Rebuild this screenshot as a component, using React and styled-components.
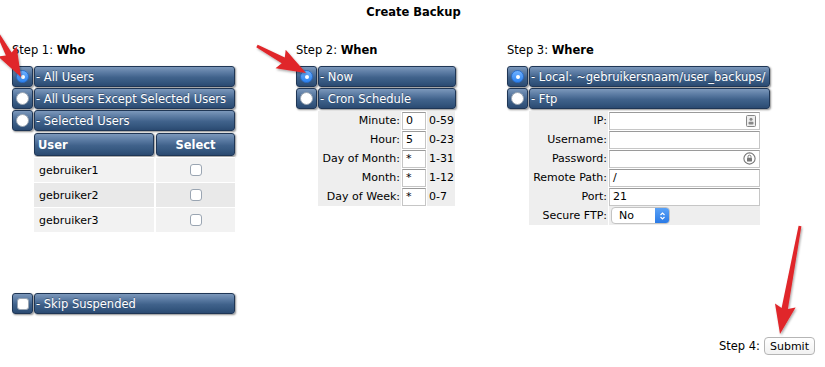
import React from "react";
import styled, { createGlobalStyle } from "styled-components";

const GlobalStyle = createGlobalStyle`
  html, body {
    margin: 0;
    padding: 0;
    background: #fff;
  }
  body {
    font-family: "DejaVu Sans", Verdana, sans-serif;
    font-size: 11px;
    color: #000;
  }
`;

const Page = styled.div`
  position: relative;
  width: 825px;
  height: 367px;
  overflow: hidden;
`;

const Title = styled.div`
  text-align: center;
  font-weight: bold;
  font-size: 11.5px;
  padding-top: 5px;
  height: 21px;
  padding-left: 2px;
`;

const Columns = styled.div`
  display: flex;
  align-items: flex-start;
  padding-top: 17px;
`;

const Column = styled.div`
  display: flex;
  flex-direction: column;
  width: ${(p) => p.$width}px;
  margin-left: ${(p) => p.$offset}px;
`;

const StepHeading = styled.div`
  font-size: 11.5px;
  height: 23px;
  b {
    font-weight: bold;
  }
`;

const barGradient = `
  background: linear-gradient(
    to bottom,
    #7c98bb 0%,
    #5a7aa2 30%,
    #40628b 55%,
    #34567e 80%,
    #2b4a71 100%
  );
  border: 1px solid #1f3655;
  border-radius: 3px;
  box-shadow: 1px 1px 2px rgba(0, 0, 0, 0.45);
`;

const OptionRow = styled.div`
  display: flex;
  gap: 1px;
  height: 21px;
  margin-bottom: 1px;
`;

const ToggleCell = styled.div`
  ${barGradient}
  width: 19px;
  display: flex;
  align-items: center;
  justify-content: center;
  flex-shrink: 0;
`;

const Radio = styled.span`
  width: 13px;
  height: 13px;
  border-radius: 50%;
  box-sizing: border-box;
  display: flex;
  align-items: center;
  justify-content: center;
  background: ${(p) =>
    p.$on ? "linear-gradient(#6fb1ff, #2d83f0)" : "#fff"};
  border: 1px solid ${(p) => (p.$on ? "#2a6fce" : "#9aa5b2")};
  &::after {
    content: "";
    width: 4px;
    height: 4px;
    border-radius: 50%;
    background: #fff;
    display: ${(p) => (p.$on ? "block" : "none")};
  }
`;

const Square = styled.span`
  width: 12px;
  height: 12px;
  border-radius: 3px;
  background: #fff;
  border: 1px solid #9aa5b2;
  box-sizing: border-box;
`;

const OptionLabel = styled.div`
  ${barGradient}
  flex: 1;
  color: #fff;
  font-size: 11.5px;
  display: flex;
  align-items: center;
  padding-left: 1px;
  white-space: nowrap;
  overflow: hidden;
  text-shadow: 0 -1px 0 rgba(0, 0, 0, 0.3);
`;

const UserTable = styled.div`
  margin-left: 22px;
  margin-top: 1px;
  display: grid;
  grid-template-columns: 120px 1fr;
  column-gap: 2px;
`;

const HeadCell = styled.div`
  ${barGradient}
  height: 21px;
  color: #fff;
  font-weight: bold;
  font-size: 11.5px;
  display: flex;
  align-items: center;
  justify-content: ${(p) => (p.$center ? "center" : "flex-start")};
  padding-left: ${(p) => (p.$center ? 0 : 3)}px;
  margin-bottom: 1px;
`;

const UserCell = styled.div`
  height: 24px;
  background: ${(p) => (p.$alt ? "#e9e9e9" : "#f2f2f2")};
  border-top: 1px solid #fff;
  display: flex;
  align-items: center;
  justify-content: ${(p) => (p.$center ? "center" : "flex-start")};
  padding-left: ${(p) => (p.$center ? 0 : 5)}px;
  font-size: 11px;
`;

const SkipRow = styled(OptionRow)`
  margin-top: 61px;
`;

const FieldTable = styled.div`
  margin-left: 22px;
  margin-top: 1px;
  display: grid;
  grid-template-columns: ${(p) => p.$cols};
  column-gap: 1px;
`;

const FieldLabel = styled.div`
  height: 19px;
  background: #eeeeee;
  display: flex;
  align-items: center;
  justify-content: flex-end;
  padding-right: 1px;
  white-space: nowrap;
  font-size: 11px;
`;

const FieldValue = styled.div`
  height: 19px;
  background: ${(p) => (p.$plain ? "#eeeeee" : "#fff")};
  display: flex;
  align-items: center;
  padding-left: ${(p) => (p.$plain ? 2 : 0)}px;
  font-size: 11px;
`;

const TextInput = styled.div`
  box-sizing: border-box;
  width: 100%;
  height: 18px;
  border: 1px solid #c6c6c6;
  border-top-color: #9a9a9a;
  background: #fff;
  display: flex;
  align-items: center;
  justify-content: space-between;
  padding: 0 3px;
  font-size: 11px;
`;

const SelectBox = styled.div`
  box-sizing: border-box;
  width: 59px;
  height: 17px;
  border: 1px solid #c3c3c3;
  border-radius: 4px;
  background: #fff;
  display: flex;
  align-items: center;
  justify-content: space-between;
  padding-left: 7px;
  font-size: 11px;
  overflow: hidden;
`;

const SelectArrow = styled.span`
  width: 14px;
  height: 100%;
  background: linear-gradient(#5aa2f7, #2a7ae6);
  display: flex;
  align-items: center;
  justify-content: center;
`;

const Footer = styled.div`
  position: absolute;
  right: 10px;
  top: 337px;
  display: flex;
  align-items: center;
  gap: 4px;
  font-size: 11.5px;
`;

const SubmitButton = styled.button`
  font-family: "DejaVu Sans", Verdana, sans-serif;
  font-size: 11px;
  height: 18px;
  padding: 0 5px;
  background: linear-gradient(#fff, #f1f1f1);
  border: 1px solid #b5b5b5;
  border-radius: 4px;
  color: #000;
`;

const Overlay = styled.svg`
  position: absolute;
  left: 0;
  top: 0;
  pointer-events: none;
`;

const Arrow = ({ x1, y1, x2, y2 }) => {
  const dx = x2 - x1;
  const dy = y2 - y1;
  const len = Math.hypot(dx, dy);
  const ux = dx / len;
  const uy = dy / len;
  const nx = -uy;
  const ny = ux;
  const headLen = 26;
  const headW = 10.5;
  const tailW = 1.4;
  const neckW = 3.2;
  const bx = x2 - ux * headLen;
  const by = y2 - uy * headLen;
  const pts = [
    [x1 + nx * tailW, y1 + ny * tailW],
    [bx + nx * neckW, by + ny * neckW],
    [bx + nx * headW - ux * 3, by + ny * headW - uy * 3],
    [x2, y2],
    [bx - nx * headW - ux * 3, by - ny * headW - uy * 3],
    [bx - nx * neckW, by - ny * neckW],
    [x1 - nx * tailW, y1 - ny * tailW],
  ]
    .map((p) => p.map((v) => v.toFixed(1)).join(","))
    .join(" ");
  return <polygon points={pts} fill="#e0262a" filter="url(#arrowShadow)" />;
};

const OpenLock = () => (
  <svg width="13" height="13" viewBox="0 0 13 13">
    <circle cx="6.5" cy="6.5" r="5.6" fill="none" stroke="#777" strokeWidth="1.1" />
    <rect x="4" y="5.8" width="5" height="3.8" rx="0.7" fill="#777" />
    <path d="M5 5.8V4.7a1.5 1.5 0 0 1 3 0v1.1" fill="none" stroke="#777" strokeWidth="1" />
  </svg>
);

const ContactIcon = () => (
  <svg width="10" height="12" viewBox="0 0 10 12">
    <rect x="0.5" y="0.5" width="9" height="11" rx="1" fill="#eee" stroke="#888" />
    <circle cx="5" cy="4.3" r="1.5" fill="#888" />
    <rect x="2.5" y="6.8" width="5" height="2.6" rx="1" fill="#888" />
  </svg>
);

const Chevrons = () => (
  <svg width="7" height="10" viewBox="0 0 7 10">
    <path d="M1.5 4 L3.5 2 L5.5 4 M1.5 6 L3.5 8 L5.5 6" fill="none" stroke="#fff" strokeWidth="1.2" />
  </svg>
);

const users = ["gebruiker1", "gebruiker2", "gebruiker3"];

const cron = [
  ["Minute:", "0", "0-59"],
  ["Hour:", "5", "0-23"],
  ["Day of Month:", "*", "1-31"],
  ["Month:", "*", "1-12"],
  ["Day of Week:", "*", "0-7"],
];

const ftpFields = [
  ["IP:", "", <ContactIcon key="c" />],
  ["Username:", "", null],
  ["Password:", "", <OpenLock key="l" />],
  ["Remote Path:", "/", null],
  ["Port:", "21", null],
];

export default function App() {
  return (
    <Page>
      <GlobalStyle />
      <Title>Create Backup</Title>
      <Columns>
        <Column $width={223} $offset={12}>
          <StepHeading>
            Step 1: <b>Who</b>
          </StepHeading>
          <OptionRow>
            <ToggleCell>
              <Radio $on />
            </ToggleCell>
            <OptionLabel>- All Users</OptionLabel>
          </OptionRow>
          <OptionRow>
            <ToggleCell>
              <Radio />
            </ToggleCell>
            <OptionLabel>- All Users Except Selected Users</OptionLabel>
          </OptionRow>
          <OptionRow>
            <ToggleCell>
              <Radio />
            </ToggleCell>
            <OptionLabel>- Selected Users</OptionLabel>
          </OptionRow>
          <UserTable>
            <HeadCell>User</HeadCell>
            <HeadCell $center>Select</HeadCell>
            {users.map((u, i) => (
              <React.Fragment key={u}>
                <UserCell $alt={i === 1}>{u}</UserCell>
                <UserCell $alt={i === 1} $center>
                  <Square />
                </UserCell>
              </React.Fragment>
            ))}
          </UserTable>
          <SkipRow>
            <ToggleCell>
              <Square />
            </ToggleCell>
            <OptionLabel>- Skip Suspended</OptionLabel>
          </SkipRow>
        </Column>

        <Column $width={160} $offset={61}>
          <StepHeading>
            Step 2: <b>When</b>
          </StepHeading>
          <OptionRow>
            <ToggleCell>
              <Radio $on />
            </ToggleCell>
            <OptionLabel>- Now</OptionLabel>
          </OptionRow>
          <OptionRow>
            <ToggleCell>
              <Radio />
            </ToggleCell>
            <OptionLabel>- Cron Schedule</OptionLabel>
          </OptionRow>
          <FieldTable $cols="83px 24px 28px">
            {cron.map(([label, val, range]) => (
              <React.Fragment key={label}>
                <FieldLabel>{label}</FieldLabel>
                <FieldValue>
                  <TextInput>{val}</TextInput>
                </FieldValue>
                <FieldValue $plain>{range}</FieldValue>
              </React.Fragment>
            ))}
          </FieldTable>
        </Column>

        <Column $width={263} $offset={51}>
          <StepHeading>
            Step 3: <b>Where</b>
          </StepHeading>
          <OptionRow>
            <ToggleCell>
              <Radio $on />
            </ToggleCell>
            <OptionLabel>- Local: ~gebruikersnaam/user_backups/</OptionLabel>
          </OptionRow>
          <OptionRow>
            <ToggleCell>
              <Radio />
            </ToggleCell>
            <OptionLabel>- Ftp</OptionLabel>
          </OptionRow>
          <FieldTable $cols="79px 151px">
            {ftpFields.map(([label, val, icon]) => (
              <React.Fragment key={label}>
                <FieldLabel>{label}</FieldLabel>
                <FieldValue>
                  <TextInput>
                    <span>{val}</span>
                    {icon}
                  </TextInput>
                </FieldValue>
              </React.Fragment>
            ))}
            <FieldLabel>Secure FTP:</FieldLabel>
            <FieldValue $plain>
              <SelectBox>
                <span>No</span>
                <SelectArrow>
                  <Chevrons />
                </SelectArrow>
              </SelectBox>
            </FieldValue>
          </FieldTable>
        </Column>
      </Columns>

      <Footer>
        Step 4:
        <SubmitButton type="button">Submit</SubmitButton>
      </Footer>

      <Overlay width="825" height="367">
        <defs>
          <filter id="arrowShadow" x="-20%" y="-20%" width="140%" height="140%">
            <feDropShadow dx="1" dy="1.5" stdDeviation="1.2" floodColor="#000" floodOpacity="0.35" />
          </filter>
        </defs>
        <Arrow x1={-2} y1={34} x2={21} y2={77} />
        <Arrow x1={257} y1={46} x2={306} y2={73} />
        <Arrow x1={800} y1={226} x2={780} y2={334} />
      </Overlay>
    </Page>
  );
}
